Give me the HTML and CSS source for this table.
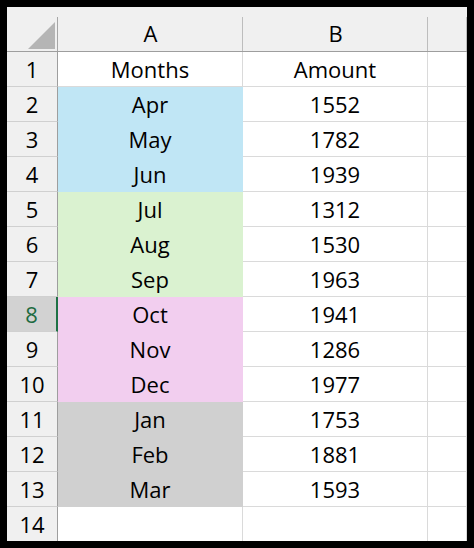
FILE: index.html
```html
<!DOCTYPE html>
<html>
<head>
<meta charset="utf-8">
<link rel="stylesheet" href="styles.css">
</head>
<body>
<div class="sheet">
  <div class="corner"><div class="tri"></div></div>
  <div class="colhead">A</div>
  <div class="colhead">B</div>
  <div class="colhead"></div>

  <div class="rowhead">1</div><div class="cell">Months</div><div class="cell">Amount</div><div class="cell"></div>
  <div class="rowhead">2</div><div class="cell blue">Apr</div><div class="cell">1552</div><div class="cell"></div>
  <div class="rowhead">3</div><div class="cell blue">May</div><div class="cell">1782</div><div class="cell"></div>
  <div class="rowhead">4</div><div class="cell blue">Jun</div><div class="cell">1939</div><div class="cell"></div>
  <div class="rowhead">5</div><div class="cell green">Jul</div><div class="cell">1312</div><div class="cell"></div>
  <div class="rowhead">6</div><div class="cell green">Aug</div><div class="cell">1530</div><div class="cell"></div>
  <div class="rowhead">7</div><div class="cell green">Sep</div><div class="cell">1963</div><div class="cell"></div>
  <div class="rowhead active">8</div><div class="cell pink">Oct</div><div class="cell">1941</div><div class="cell"></div>
  <div class="rowhead">9</div><div class="cell pink">Nov</div><div class="cell">1286</div><div class="cell"></div>
  <div class="rowhead">10</div><div class="cell pink">Dec</div><div class="cell">1977</div><div class="cell"></div>
  <div class="rowhead">11</div><div class="cell gray">Jan</div><div class="cell">1753</div><div class="cell"></div>
  <div class="rowhead">12</div><div class="cell gray">Feb</div><div class="cell">1881</div><div class="cell"></div>
  <div class="rowhead">13</div><div class="cell gray">Mar</div><div class="cell">1593</div><div class="cell"></div>
  <div class="rowhead">14</div><div class="cell"></div><div class="cell"></div><div class="cell"></div>
</div>
</body>
</html>
```
FILE: styles.css
```css
html, body {
  margin: 0;
  padding: 0;
  background: #000;
}
body {
  padding: 7px;
}
.sheet {
  width: 460px;
  height: 534px;
  overflow: hidden;
  background: #fff;
  display: grid;
  grid-template-columns: 51px 185px 185px 39px;
  grid-template-rows: 45px repeat(14, 35px);
  font-family: "Open Sans", "Noto Sans", sans-serif;
  font-size: 22px;
  color: #000;
}
.sheet > div {
  box-sizing: border-box;
  display: flex;
  align-items: center;
  justify-content: center;
  padding-bottom: 1px;
}
.corner {
  background: linear-gradient(#a6a6a6, #a6a6a6) right bottom / 1px 34px no-repeat, #f0f0f0;
  border-bottom: 1px solid #9e9e9e;
  justify-content: flex-end !important;
  align-items: flex-end !important;
  padding: 0 3px 2px 0 !important;
}
.tri {
  width: 27px;
  height: 27px;
  background: #b5b5b5;
  clip-path: polygon(100% 0, 100% 100%, 0 100%);
}
.colhead {
  background: linear-gradient(#bdbdbd, #bdbdbd) right bottom / 1px 34px no-repeat, #f0f0f0;
  border-bottom: 1px solid #9e9e9e;
  padding-top: 8px;
}
.rowhead {
  background: #f0f0f0;
  border-right: 1px solid #9e9e9e;
  border-bottom: 1px solid #d0d0d0;
}
.rowhead.active {
  background: #d2d2d2;
  color: #1d6b41;
  border-right: 2px solid #1e7145;
}
.cell {
  border-right: 1px solid #dadada;
  border-bottom: 1px solid #dadada;
}
.blue { background: #c0e6f5; border-color: #c0e6f5; }
.green { background: #daf2d0; border-color: #daf2d0; }
.pink { background: #f2ceef; border-color: #f2ceef; }
.gray { background: #d0d0d0; border-color: #d0d0d0; }
```
